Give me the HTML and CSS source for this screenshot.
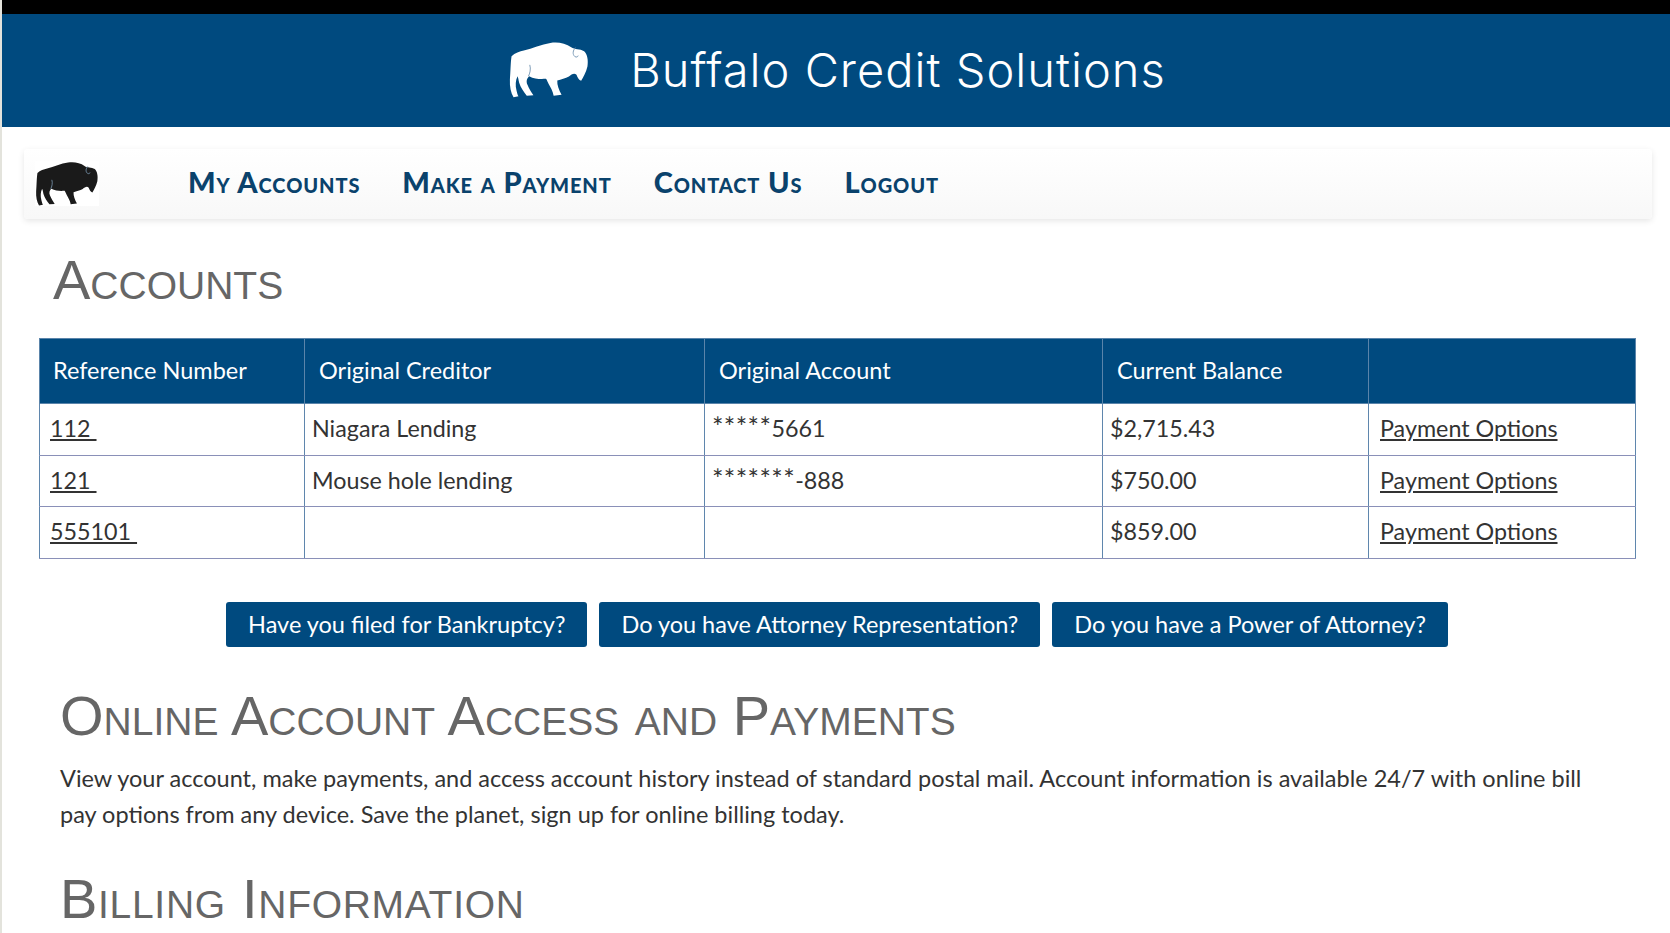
FILE: index.html
```html
<!DOCTYPE html>
<html lang="en">
<head>
    <meta charset="UTF-8">
    <meta name="viewport" content="width=device-width, initial-scale=1.0">
    <title>Buffalo Credit Solutions</title>
    <link rel="stylesheet" href="styles.css">
</head>
<body>

    <svg class="icon-defs" width="0" height="0">
        <symbol id="bison" viewBox="88 66 240 172">
            <path fill="currentColor" d="M95 112 C105 102 120 98 132 95 C158 88 185 76 212 72 C232 68 258 72 275 85 C285 93 302 89 314 97 C324 106 327 125 324 143 C320 160 311 176 305 186 C298 184 294 176 291 168 C284 161 276 167 268 173 C258 179 244 182 233 185 C232 198 238 214 246 228 L222 231 C220 218 212 205 207 196 C204 190 202 184 199 180 C182 181 165 181 148 172 C142 178 138 186 143 198 C148 210 155 221 161 230 L141 231 C132 220 122 206 118 192 C116 182 115 176 113 172 C107 184 106 200 110 215 C112 224 114 230 116 233 L101 236 C93 222 89 205 90 182 C92 160 92 130 95 112 Z"/>
            <path class="bison-horn" d="M288 86 C280 94 278 106 286 113 C291 116 295 114 296 110"/>
            <path class="bison-horn" d="M150 138 C154 150 150 165 146 172"/>
        </symbol>
    </svg>

    <header class="site-header">
        <svg class="header-logo"><use href="#bison"></use></svg>
        <span class="site-title">Buffalo Credit Solutions</span>
    </header>

    <nav class="main-nav">
        <div class="nav-logo">
            <svg class="nav-bison"><use href="#bison"></use></svg>
        </div>
        <a href="#">My Accounts</a>
        <a href="#">Make a Payment</a>
        <a href="#">Contact Us</a>
        <a href="#">Logout</a>
    </nav>

    <main class="content">
        <h2 class="accounts-title">Accounts</h2>

        <table class="accounts-table">
            <colgroup>
                <col class="col-ref">
                <col class="col-creditor">
                <col class="col-account">
                <col class="col-balance">
                <col class="col-options">
            </colgroup>
            <thead>
                <tr>
                    <th>Reference Number</th>
                    <th>Original Creditor</th>
                    <th>Original Account</th>
                    <th>Current Balance</th>
                    <th></th>
                </tr>
            </thead>
            <tbody>
                <tr>
                    <td><a class="ref-link" href="#">112&nbsp;</a></td>
                    <td>Niagara Lending</td>
                    <td><span class="mask">*****</span>5661</td>
                    <td>$2,715.43</td>
                    <td><a class="pay-link" href="#">Payment Options</a></td>
                </tr>
                <tr class="row-short">
                    <td><a class="ref-link" href="#">121&nbsp;</a></td>
                    <td>Mouse hole lending</td>
                    <td><span class="mask">*******</span>-888</td>
                    <td>$750.00</td>
                    <td><a class="pay-link" href="#">Payment Options</a></td>
                </tr>
                <tr>
                    <td><a class="ref-link" href="#">555101&nbsp;</a></td>
                    <td></td>
                    <td></td>
                    <td>$859.00</td>
                    <td><a class="pay-link" href="#">Payment Options</a></td>
                </tr>
            </tbody>
        </table>

        <div class="button-row">
            <a class="blue-button" href="#">Have you filed for Bankruptcy?</a>
            <a class="blue-button" href="#">Do you have Attorney Representation?</a>
            <a class="blue-button" href="#">Do you have a Power of Attorney?</a>
        </div>

        <section class="info">
            <h2>Online Account Access and Payments</h2>
            <p>View your account, make payments, and access account history instead of standard postal mail. Account information is available 24/7 with online bill pay options from any device. Save the planet, sign up for online billing today.</p>
            <h2 class="billing-title">Billing Information</h2>
        </section>
    </main>

</body>
</html>
```

FILE: styles.css
```css
html, body {
    height: 100%;
    overflow: hidden;
}
body {
    margin: 0;
    border-left: 2px solid #e3e3dc;
    font-family: Lato, "Open Sans", sans-serif;
    font-size: 23.5px;
    color: #333;
    background-color: #fff;
}
.icon-defs {
    position: absolute;
}
.bison-horn {
    fill: none;
    stroke: #7f9db8;
    stroke-width: 3;
}
.site-header {
    display: flex;
    align-items: center;
    justify-content: center;
    gap: 41px;
    height: 111px;
    padding: 0 0 2px 3px;
    border-top: 14px solid #000;
    background-color: #004a7f;
    color: #fff;
}
.header-logo {
    width: 80px;
    height: 57px;
}
.site-title {
    font-family: Inter, Lato, sans-serif;
    font-size: 47px;
    font-weight: 300;
    letter-spacing: 1px;
}
.main-nav {
    display: flex;
    align-items: center;
    gap: 42px;
    height: 70px;
    margin: 22px 18px 0 22px;
    padding-left: 11px;
    border-radius: 4px;
    background: linear-gradient(#fff, #f8f8f8);
    box-shadow: 0 2px 6px rgba(0, 0, 0, 0.1);
}
.main-nav a {
    margin-bottom: 6px;
    font-size: 29px;
    font-weight: 900;
    font-variant: small-caps;
    letter-spacing: 0.9px;
    color: #0a426c;
    text-decoration: none;
}
.nav-logo {
    display: flex;
    width: 64px;
    height: 45px;
    margin: 0 47px 2px 0;
    background-color: #fff;
    color: #1a1a1a;
}
.nav-bison {
    width: 64px;
    height: 45px;
}
.content {
    padding: 0 32px 0 37px;
}
.content h2 {
    margin: 0;
    font-family: "Liberation Sans", Arial, sans-serif;
    font-size: 56px;
    font-weight: 400;
    font-variant: small-caps;
    color: #666;
}
.accounts-title {
    padding: 31px 0 28px 14px;
    line-height: 60px;
}
.accounts-table {
    width: 1596px;
    border-collapse: collapse;
    table-layout: fixed;
}
.col-ref { width: 265px; }
.col-creditor { width: 400px; }
.col-account { width: 398px; }
.col-balance { width: 266px; }
.col-options { width: 267px; }
.accounts-table th {
    height: 62px;
    padding: 0 14px 2px;
    border: 1px solid #5a84aa;
    background-color: #004a7f;
    color: #fff;
    font-weight: 400;
    text-align: left;
}
.accounts-table th:first-child {
    padding-left: 13px;
}
.accounts-table td {
    height: 48px;
    padding: 0 7px 3px;
    border: 1px solid #5f86ad;
    border-top-color: #8a90b8;
    border-bottom-color: #8a90b8;
    font-size: 23.3px;
}
.row-short td {
    height: 47px;
}
.accounts-table a {
    color: #333;
}
.ref-link {
    margin-left: 3px;
}
.pay-link {
    margin-left: 4px;
}
.mask {
    font-size: 27px;
    line-height: 0;
    letter-spacing: 0.4px;
}
.button-row {
    display: flex;
    justify-content: center;
    gap: 12px;
    margin: 43px 0 0 -3px;
}
.blue-button {
    display: flex;
    align-items: center;
    height: 44px;
    padding: 0 22px 1px;
    border-radius: 3px;
    background-color: #004a7f;
    color: #fff;
    text-decoration: none;
}
.info {
    padding-left: 21px;
}
.info h2 {
    padding-top: 39px;
    line-height: 60px;
}
.info p {
    max-width: 1540px;
    margin: 14px 0 0;
    line-height: 36px;
}
.info .billing-title {
    padding-top: 37px;
    letter-spacing: 0.7px;
}
```
